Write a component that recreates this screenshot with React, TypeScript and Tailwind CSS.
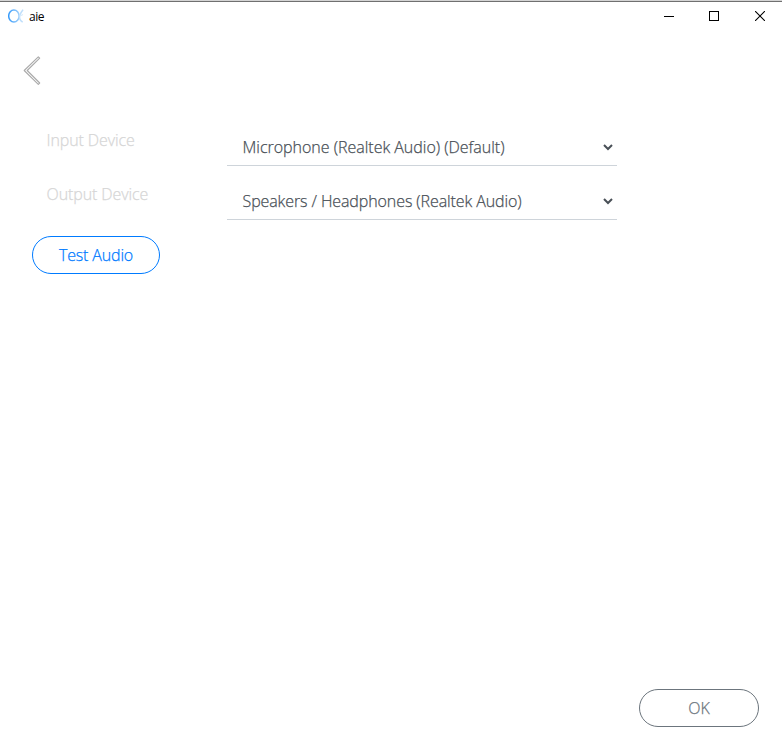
import React from "react";

function TitleBar() {
  return (
    <header className="flex h-8 shrink-0 items-start border-t border-[#d4d4d4]">
      <div className="flex h-[31px] w-full items-center border-t border-[#707070]">
        <svg className="ml-2 h-4 w-4" viewBox="0 0 16 16" fill="none">
          <defs>
            <linearGradient id="logo" x1="0" y1="0" x2="12" y2="0" gradientUnits="userSpaceOnUse">
              <stop offset="0" stopColor="#3399fa" />
              <stop offset="1" stopColor="#a4d2fb" />
            </linearGradient>
          </defs>
          <ellipse cx="5.9" cy="7" rx="5.2" ry="6" stroke="url(#logo)" strokeWidth="1.5" />
          <path d="M15 .6C13.5 3.2 11.5 5 11.5 7.500c0 2.600 1.200 4.600 3.200 5.600" stroke="#bfdffb" strokeWidth="1.5" />
          <path d="M12 7l3-1.500" stroke="#d6eafc" strokeWidth="1.2" />
        </svg>
        <span className="ml-[5px] text-[12px] font-normal leading-4 tracking-[-0.5px] text-black">aie</span>
        <div className="ml-auto flex h-full items-center pb-0.5">
          <button aria-label="Minimize" className="flex h-full w-[46px] items-center justify-center">
            <svg width="10" height="10" viewBox="0 0 10 10" shapeRendering="crispEdges"><path d="M0 5.5h10" stroke="#000" /></svg>
          </button>
          <button aria-label="Maximize" className="flex h-full w-[44px] items-center justify-center">
            <svg width="10" height="10" viewBox="0 0 10 10" fill="none" shapeRendering="crispEdges"><path d="M.5.5h9v9h-9z" stroke="#000" /></svg>
          </button>
          <button aria-label="Close" className="flex h-full w-[46px] items-center justify-end pr-[17px]">
            <svg width="10" height="10" viewBox="0 0 10 10"><path d="M0 0l10 10M10 0L0 10" stroke="#000" strokeWidth="1.1" /></svg>
          </button>
        </div>
      </div>
    </header>
  );
}

function DeviceRow({ label, value, tracking }: { label: string; value: string; tracking: string }) {
  return (
    <div className="flex h-[38px] items-start">
      <span className="w-[180px] shrink-0 leading-6 tracking-[-0.1px] text-[#d6d6d6]">{label}</span>
      <button className="flex h-[38px] w-[390px] items-center justify-between border-b border-[#ced4da] pl-4 pr-[4px] text-[#495057]">
        <span className={`whitespace-nowrap ${tracking}`}>{value}</span>
        <svg className="mt-0.5" width="10" height="7" viewBox="0 0 10 7" fill="none"><path d="M1 1l4 4 4-4" stroke="#495057" strokeWidth="2" /></svg>
      </button>
    </div>
  );
}

export default function App() {
  return (
    <div className="flex h-[749px] w-[782px] flex-col bg-white font-['Open_Sans','Noto_Sans',sans-serif] text-[16px] font-light">
      <TitleBar />
      <main className="flex flex-1 flex-col [-webkit-text-stroke:0.25px_currentColor]">
        <button aria-label="Back" className="ml-[23px] mt-6 h-[30px] w-[18px]">
          <svg width="18" height="30" viewBox="0 0 18 30" fill="none">
            <path d="M15.3 .8L1.2 14.5 15.3 28.400 16.700 27 4.200 14.500 16.700 2.200Z" stroke="#aaa" strokeWidth="1.1" strokeLinejoin="round" />
          </svg>
        </button>
        <section className="ml-[46.5px] mr-auto mt-[42px] flex flex-col gap-4">
          <DeviceRow label="Input Device" value="Microphone (Realtek Audio) (Default)" tracking="tracking-[-0.02px]" />
          <DeviceRow label="Output Device" value="Speakers / Headphones (Realtek Audio)" tracking="tracking-[-0.1px]" />
        </section>
        <button className="ml-8 mt-4 h-[38px] w-32 rounded-full border border-[#007bff] tracking-[-0.16px] text-[#007bff]">Test Audio</button>
        <button className="mb-[22px] ml-auto mr-[23px] mt-auto h-[38px] w-[120px] rounded-full border border-[#6c757d] text-[#6c757d]">OK</button>
      </main>
    </div>
  );
}
